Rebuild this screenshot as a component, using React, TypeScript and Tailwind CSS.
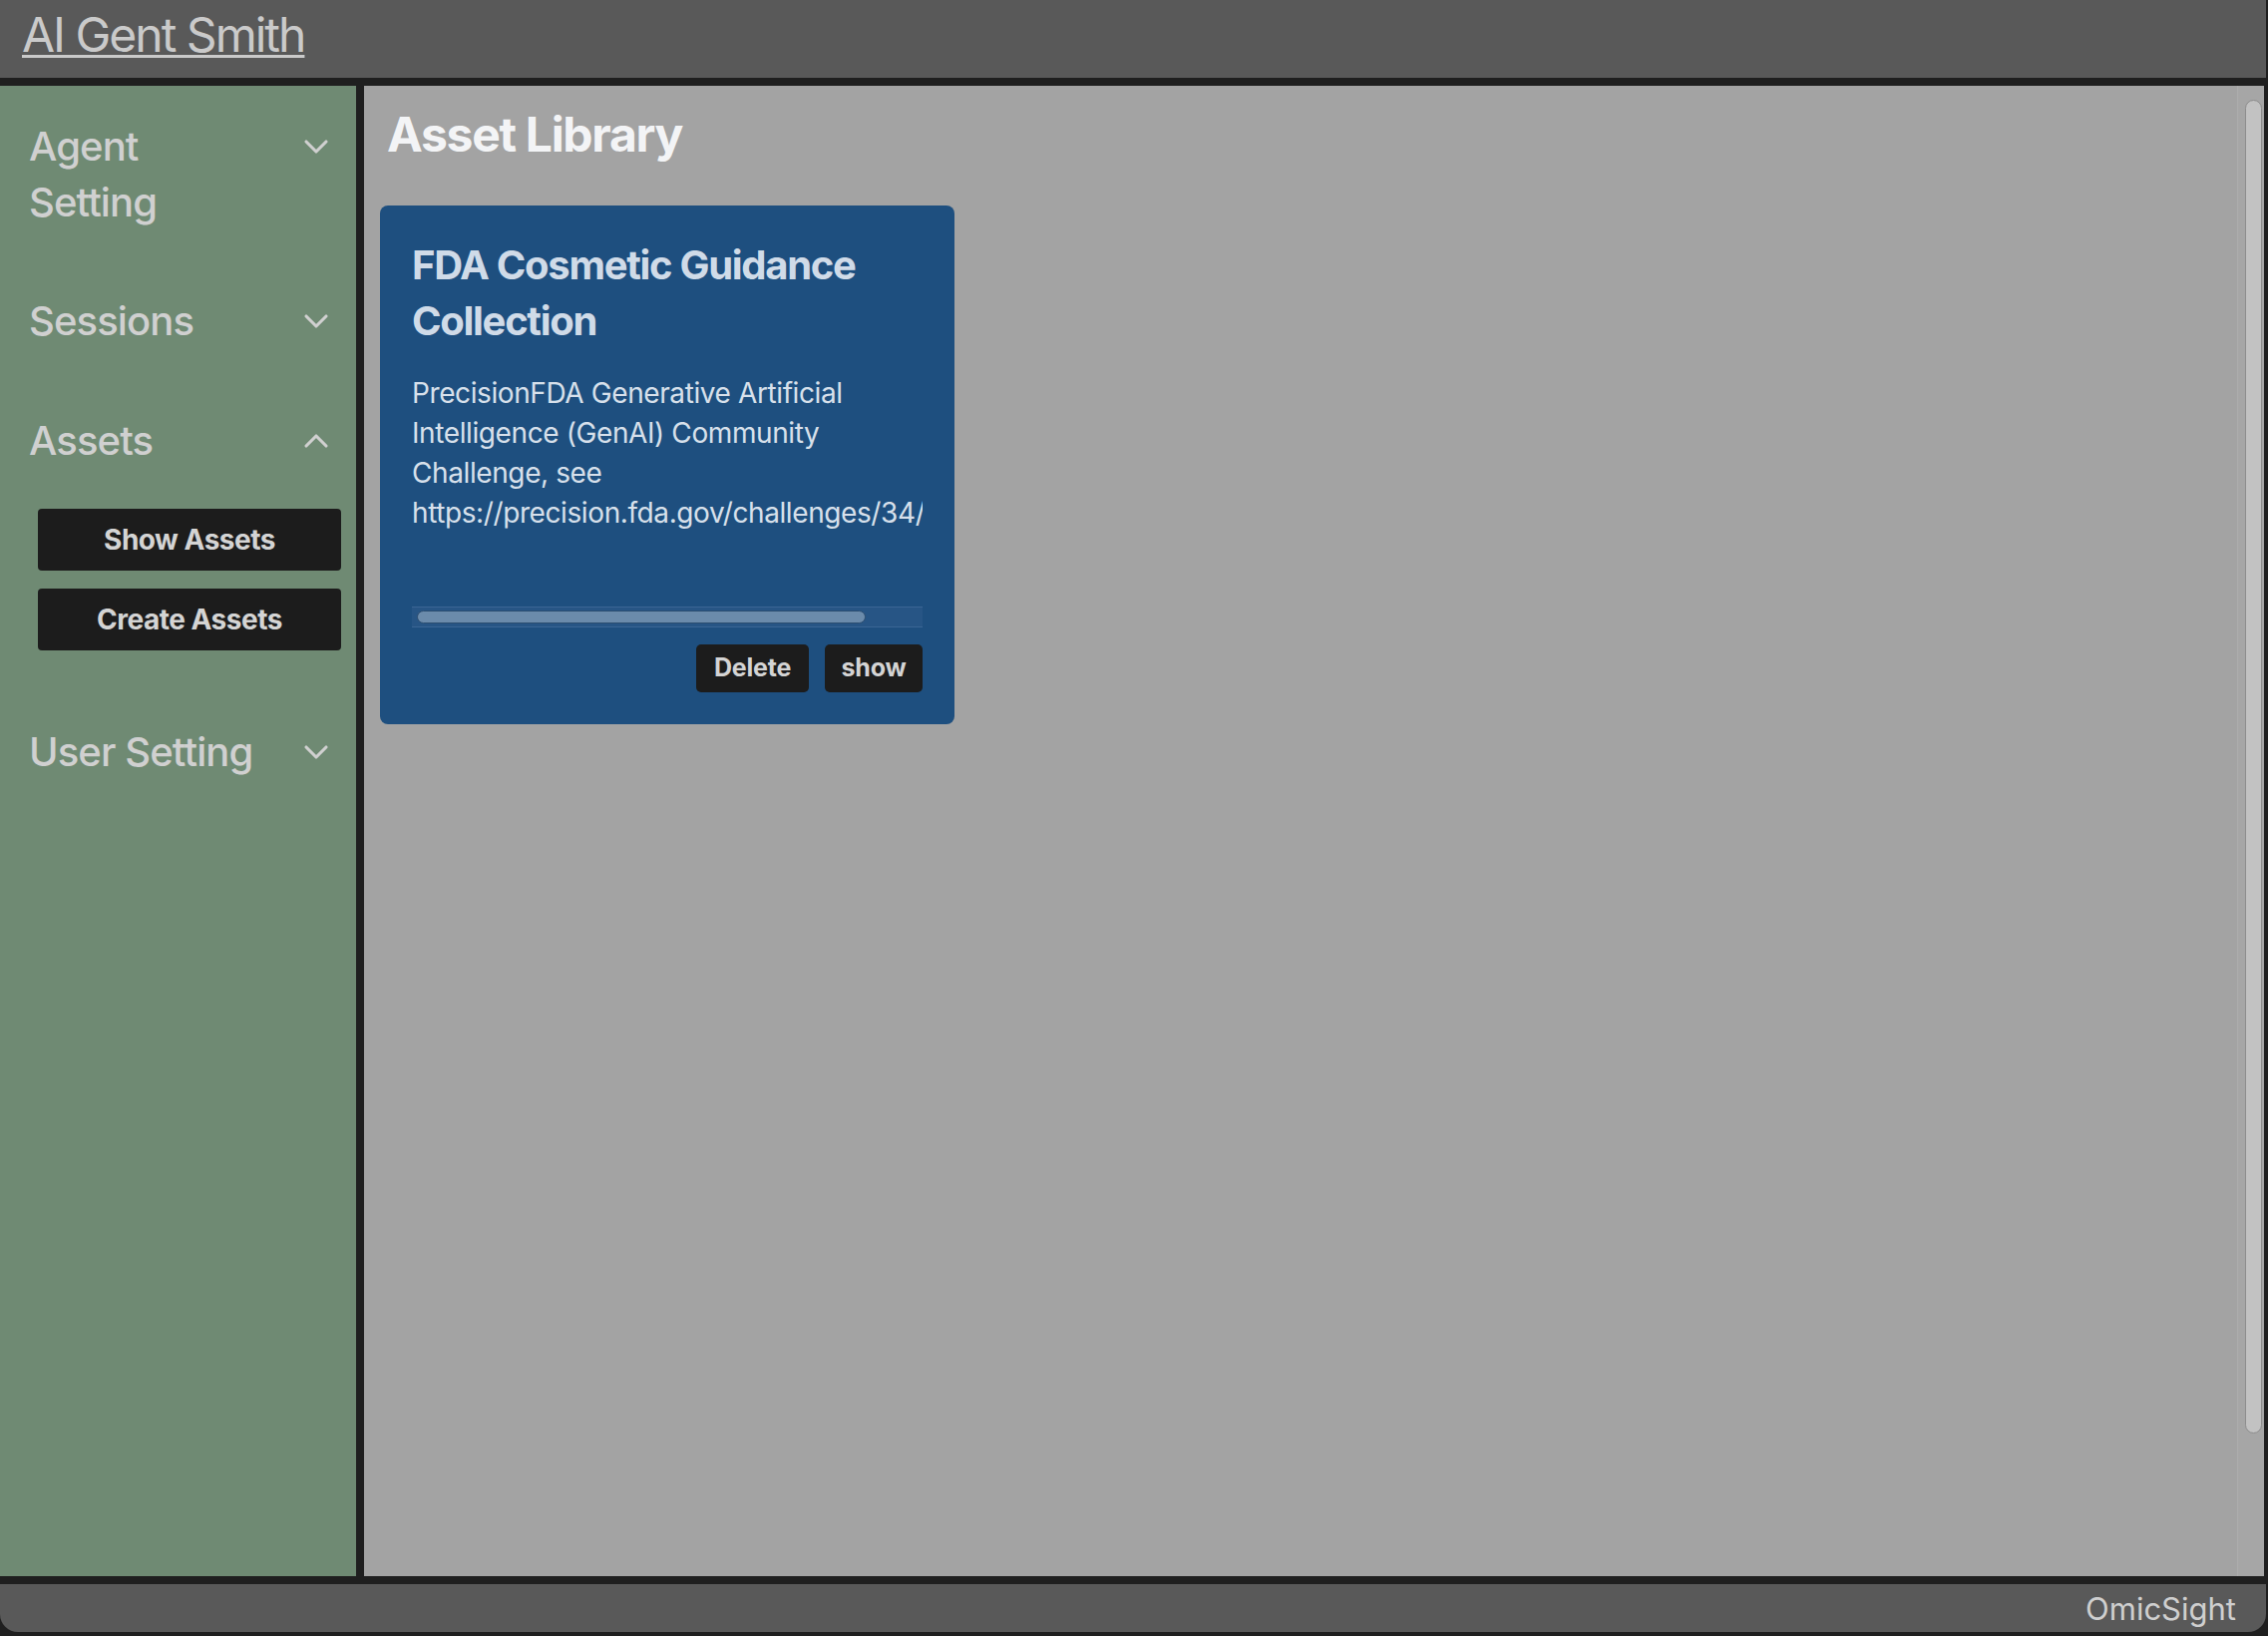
import { ChevronDown, ChevronUp } from "lucide-react";

function SideHeading({ label, open, textClass = "" }: { label: string; open?: boolean; textClass?: string }) {
  return (
    <div className="flex items-start justify-between">
      <span className={"text-[40px] leading-[56px] font-medium tracking-[-0.9px] text-[#d0d0d0] " + textClass}>{label}</span>
      <span className="h-[56px] flex items-center text-[#d0d0d0] -mr-[2px]">
        {open ? <ChevronUp size={40} strokeWidth={1.9} /> : <ChevronDown size={40} strokeWidth={1.9} />}
      </span>
    </div>
  );
}

export default function App() {
  return (
    <div className="w-full h-[1640px] bg-[#1f1f1f] flex flex-col font-['Inter',sans-serif] overflow-hidden pr-[2px]">
      <header className="h-[78px] shrink-0 bg-[#595959] pl-[22px] pt-[11px]">
        <a className="block w-fit text-[48px] leading-none tracking-[-2px] text-[#cacaca] underline decoration-[3px] underline-offset-[3px]">
          AI Gent Smith
        </a>
      </header>

      <div className="mt-[8px] h-[1494px] shrink-0 flex gap-[8px]">
        <aside className="w-[357px] shrink-0 bg-[#6f8a73] pt-[33px] pl-[29px] pr-[22px] flex flex-col">
          <SideHeading label="Agent Setting" textClass="max-w-[232px]" />
          <div className="mt-[63px]">
            <SideHeading label="Sessions" />
          </div>
          <div className="mt-[64px]">
            <SideHeading label="Assets" open />
          </div>
          <div className="mt-[40px] ml-[9px] w-[304px] flex flex-col gap-[18px]">
            <button className="h-[62px] rounded-[4px] bg-[#1c1c1c] text-[28px] font-bold tracking-[-0.5px] text-[#d4d4d4]">Show Assets</button>
            <button className="h-[62px] rounded-[4px] bg-[#1c1c1c] text-[28px] font-bold tracking-[-0.5px] text-[#d4d4d4]">Create Assets</button>
          </div>
          <div className="mt-[74px]">
            <SideHeading label="User Setting" />
          </div>
        </aside>

        <main className="flex-1 bg-[#a3a3a3] flex border-r-2 border-[#1f1f1f]">
          <div className="flex-1 pl-[16px] pt-[17px]">
            <h1 className="ml-[7px] text-[48px] leading-[64px] font-bold tracking-[-1.3px] text-[#f3f4f6]">Asset Library</h1>
            <div className="mt-[39px] w-[576px] h-[520px] bg-[#1e4f7f] rounded-[8px] p-[32px] flex flex-col">
              <h2 className="text-[40px] leading-[56px] font-bold tracking-[-1.3px] text-[#d0dbe8]">FDA Cosmetic Guidance Collection</h2>
              <div className="mt-[24px] h-[255px] flex flex-col">
                <p className="flex-1 overflow-hidden text-[28px] leading-[40px] tracking-[-0.4px] text-[#d7e0eb]">
                  PrecisionFDA Generative Artificial Intelligence (GenAI) Community Challenge, see https://precision.fda.gov/challenges/34/intro
                </p>
                <div className="h-[21px] bg-[#275585] border-y border-[#3a6594] flex items-center pl-[5px]">
                  <div className="h-[13px] w-[450px] rounded-full bg-[#6b8bab] border border-[#2c4d70]" />
                </div>
              </div>
              <div className="mt-[17px] flex justify-end gap-[16px]">
                <button className="w-[113px] h-[48px] rounded-[5px] bg-[#1c1c1c] text-[25px] font-bold tracking-[-0.2px] text-[#d4d4d4]">Delete</button>
                <button className="w-[98px] h-[48px] rounded-[5px] bg-[#1c1c1c] text-[25px] font-bold tracking-[-0.2px] text-[#d4d4d4]">show</button>
              </div>
            </div>
          </div>
          <div className="w-[27px] shrink-0 border-l border-[#adadad] bg-[#a6a6a6] pt-[14px] pl-[7px]">
            <div className="w-[17px] h-[1337px] rounded-full bg-[#c2c2c2] border border-[#8c8c8c]" />
          </div>
        </main>
      </div>

      <footer className="mt-[8px] h-[48px] shrink-0 bg-[#595959] rounded-b-[18px] flex items-center justify-end pr-[30px]">
        <span className="text-[31px] leading-none text-[#cfcfcf]">OmicSight</span>
      </footer>
    </div>
  );
}
